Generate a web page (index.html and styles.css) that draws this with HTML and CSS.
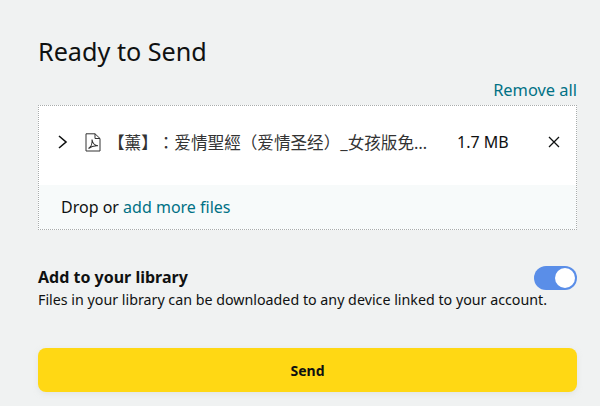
FILE: index.html
```html
<!DOCTYPE html>
<html lang="zh-Hant">
<head>
<meta charset="utf-8">
<title>Ready to Send</title>
<link rel="stylesheet" href="styles.css">
</head>
<body>
<main class="panel">
  <h1 class="title">Ready to Send</h1>
  <div class="remove-row"><a class="link">Remove all</a></div>
  <section class="dropzone">
    <div class="file-row">
      <svg class="chevron" width="12" height="16" viewBox="0 0 12 16"><path d="M2 2 L9 8 L2 14" fill="none" stroke="#0f1111" stroke-width="1.6"/></svg>
      <svg class="pdf" width="16" height="19" viewBox="0 0 16 19"><path d="M1 .8H10L15 5.5V18H1Z M10 .8V5.5H15" fill="none" stroke="#333" stroke-width="1"/><path d="M3.5 15.5C6 14 7.5 10 7 6.5C7.5 10 9.5 12.5 13 12.8C9.5 12.5 6 13.5 3.5 15.5Z" fill="none" stroke="#333" stroke-width="1.1"/></svg>
      <span class="file-name">【薰】：爱情聖經（爱情圣经）_女孩版免…</span>
      <span class="file-size">1.7 MB</span>
      <svg class="close" width="12" height="12" viewBox="0 0 12 12"><path d="M1 1 L11 11 M11 1 L1 11" stroke="#0f1111" stroke-width="1.3"/></svg>
    </div>
    <div class="drop-row">Drop or <a class="link">add more files</a></div>
  </section>
  <section class="library">
    <div class="library-head">
      <h2 class="library-title">Add to your library</h2>
      <span class="toggle"><span class="knob"></span></span>
    </div>
    <p class="library-desc">Files in your library can be downloaded to any device linked to your account.</p>
  </section>
  <button class="send">Send</button>
</main>
</body>
</html>
```

FILE: styles.css
```css
* { box-sizing: border-box; }
html, body { margin: 0; height: 100%; }
body {
  width: 600px;
  height: 406px;
  overflow: hidden;
  background: #f0f2f2;
  color: #0f1111;
  font-family: "Noto Sans", "Noto Sans CJK TC", sans-serif;
}
.panel {
  display: flex;
  flex-direction: column;
  padding: 35px 23px 0 38px;
}
.title {
  margin: 0;
  font-size: 25.2px;
  font-weight: 400;
  line-height: 32px;
}
.remove-row {
  display: flex;
  justify-content: flex-end;
  margin-top: 6px;
  height: 32px;
  font-size: 16.4px;
  line-height: 34px;
}
.link { color: #007185; }
.dropzone {
  height: 125px;
  background: #fff;
  border: 1px dotted #a8acac;
  display: flex;
  flex-direction: column;
}
.file-row {
  flex: 1;
  display: flex;
  align-items: center;
  padding: 0 16px 7px 18px;
}
.chevron { flex: none; }
.pdf { flex: none; margin-left: 16px; }
.file-name {
  width: 324px;
  margin-left: 7px;
  font-size: 16.6px;
  font-feature-settings: "chws" 0, "palt" 0;
  text-spacing-trim: space-all;
  white-space: nowrap;
  color: #333;
}
.file-size {
  flex: none;
  margin-left: 25px;
  font-size: 16px;
}
.close { flex: none; margin-left: auto; }
.drop-row {
  height: 44px;
  padding-left: 22px;
  background: #f7fafa;
  font-size: 16px;
  line-height: 44px;
}
.library { margin-top: 36px; }
.library-head {
  display: flex;
  justify-content: space-between;
  align-items: flex-start;
}
.library-title {
  margin: 0;
  font-size: 16px;
  font-weight: 700;
  line-height: 22px;
}
.library-desc {
  margin: 0;
  font-size: 14.25px;
  line-height: 20px;
  white-space: nowrap;
}
.toggle {
  flex: none;
  display: flex;
  justify-content: flex-end;
  align-items: center;
  width: 43px;
  height: 24px;
  padding-right: 2px;
  border-radius: 12px;
  background: #5a8ee8;
}
.knob {
  width: 20px;
  height: 20px;
  border-radius: 50%;
  background: #fff;
}
.send {
  margin-top: 38px;
  height: 44px;
  border: 0;
  border-radius: 8px;
  background: #ffd814;
  color: #0f1111;
  font-family: inherit;
  font-size: 14px;
  font-weight: 700;
  box-shadow: 0 2px 5px rgba(213, 217, 217, .5);
}
```
